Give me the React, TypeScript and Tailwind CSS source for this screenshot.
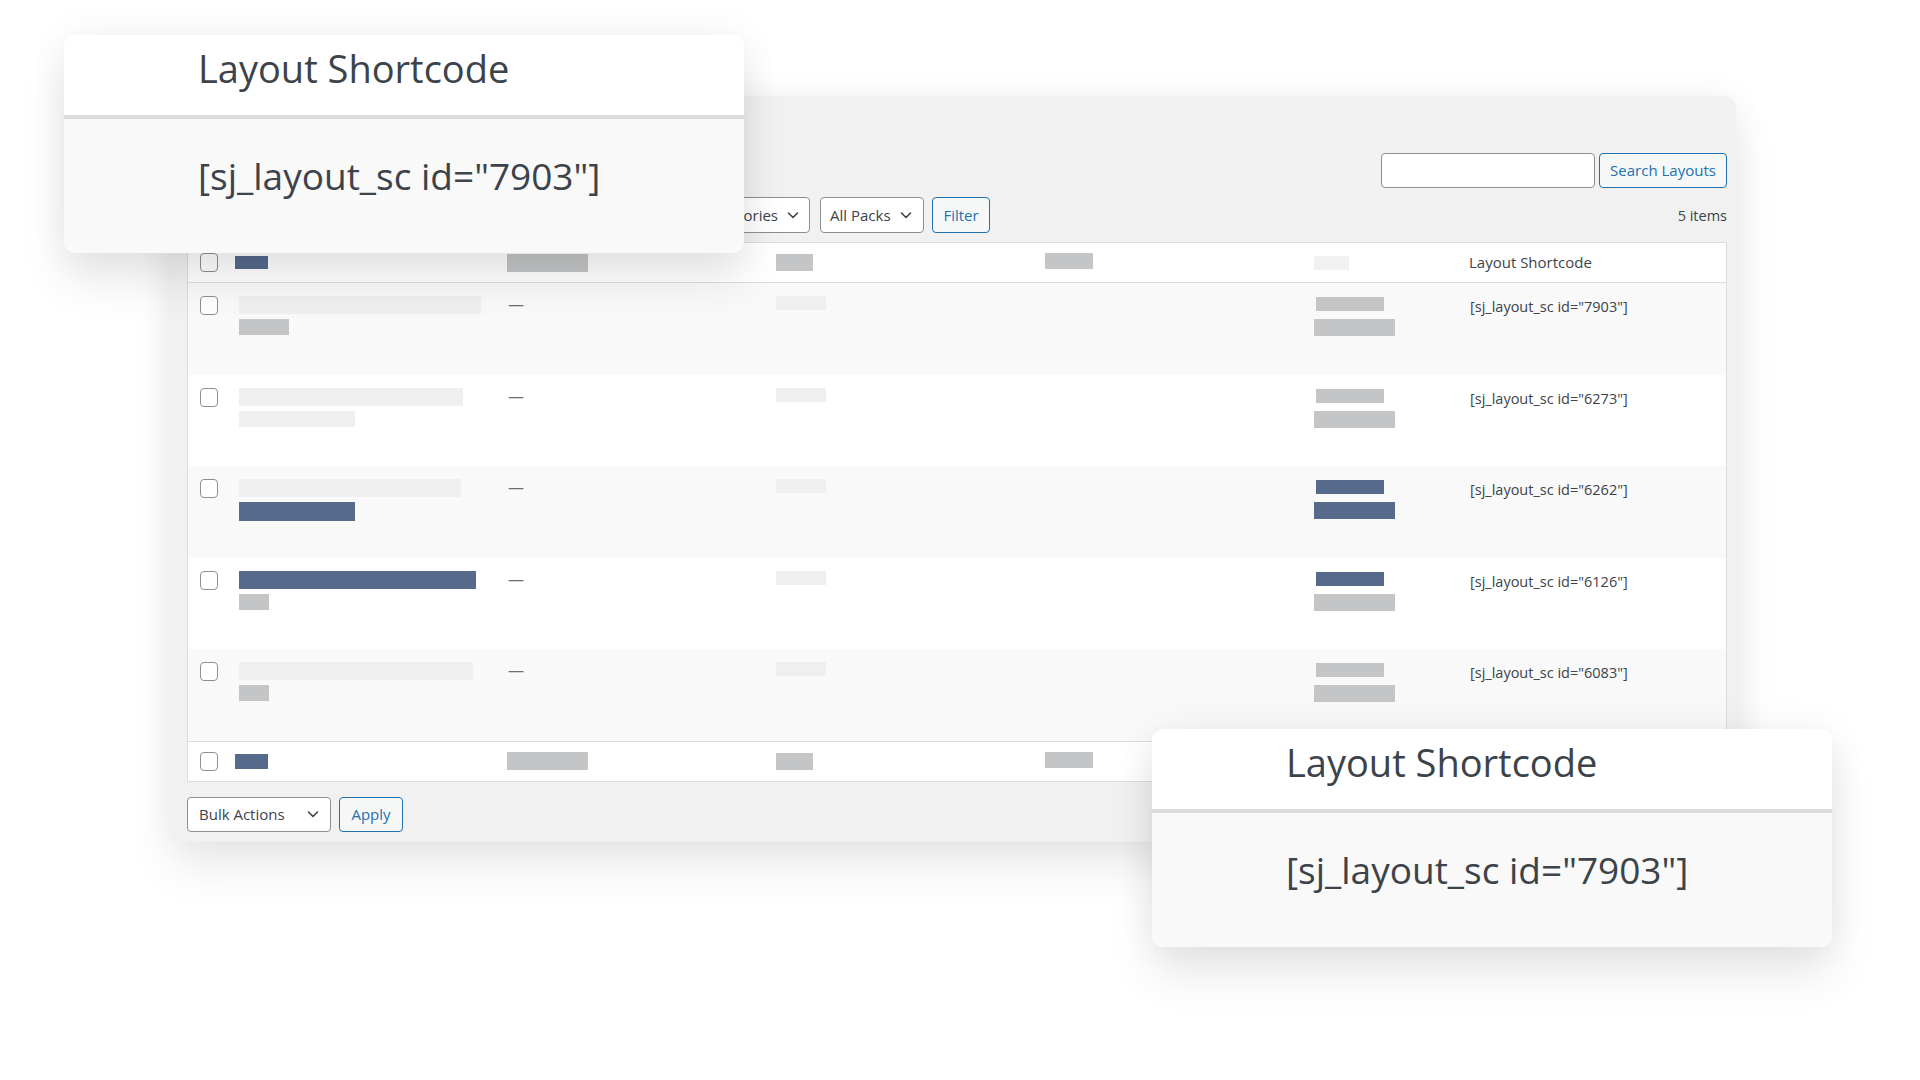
import { FC } from "react";

const font = { fontFamily: '"Open Sans", "Liberation Sans", sans-serif' };

type Bar = { w: number; tone: "light" | "gray" | "blue" };
type Row = { bar1: Bar; bar2: Bar; pack1: Bar; pack2: Bar; id: string };

const rows: Row[] = [
  { bar1: { w: 242, tone: "light" }, bar2: { w: 50, tone: "gray" }, pack1: { w: 68, tone: "gray" }, pack2: { w: 81, tone: "gray" }, id: "7903" },
  { bar1: { w: 224, tone: "light" }, bar2: { w: 116, tone: "light" }, pack1: { w: 68, tone: "gray" }, pack2: { w: 81, tone: "gray" }, id: "6273" },
  { bar1: { w: 222, tone: "light" }, bar2: { w: 116, tone: "blue" }, pack1: { w: 68, tone: "blue" }, pack2: { w: 81, tone: "blue" }, id: "6262" },
  { bar1: { w: 237, tone: "blue" }, bar2: { w: 30, tone: "gray" }, pack1: { w: 68, tone: "blue" }, pack2: { w: 81, tone: "gray" }, id: "6126" },
  { bar1: { w: 234, tone: "light" }, bar2: { w: 30, tone: "gray" }, pack1: { w: 68, tone: "gray" }, pack2: { w: 81, tone: "gray" }, id: "6083" },
];

const toneClass = (tone: Bar["tone"]) =>
  tone === "blue" ? "bg-[#566a8c]" : tone === "gray" ? "bg-[#c3c5c6]" : "bg-[#efefef]";

const Chevron: FC = () => (
  <svg width="14" height="14" viewBox="0 0 14 14" fill="none" className="shrink-0">
    <path d="M2.5 5l4.5 4.5L11.5 5" stroke="#3c434a" strokeWidth="1.6" strokeLinecap="round" strokeLinejoin="round" />
  </svg>
);

const Checkbox: FC = () => (
  <div className="w-[18px] h-[19px] rounded-[4px] border border-[#8c8f94] bg-white" />
);

const cols = "grid grid-cols-[39px_270px_269px_269px_269px_155px_267px]";

const ShortcodeCard: FC<{ pos: string }> = ({ pos }) => (
  <div
    className={`absolute ${pos} w-[680px] h-[218px] rounded-xl flex flex-col shadow-[0_28px_45px_rgba(0,0,0,0.09),0_0_38px_rgba(0,0,0,0.06)] text-[#3c434a]`}
    style={font}
  >
    <div className="h-[80px] bg-white rounded-t-xl pl-[134px] pt-[14px] text-[38px] leading-none">
      Layout Shortcode
    </div>
    <div className="h-[4px] bg-[#dcdcdc]" />
    <div className="flex-1 bg-[#f9f9f9] rounded-b-xl pl-[134px] pt-[38px] text-[37px] leading-none">
      [sj_layout_sc id="7903"]
    </div>
  </div>
);

const App: FC = () => {
  return (
    <div className="relative w-[1920px] h-[1080px] overflow-hidden bg-white text-[#3c434a]" style={font}>
      {/* list panel */}
      <div className="ml-[171px] mt-[96px] w-[1565px] h-[746px] rounded-xl bg-[#f1f1f1] pl-[16px] pr-[9px] pt-[57px] flex flex-col shadow-[0_26px_45px_rgba(0,0,0,0.08),0_0_34px_rgba(0,0,0,0.05)]">
        {/* search */}
        <div className="flex justify-end gap-[4px] h-[35px]">
          <div className="w-[214px] h-full rounded-[4px] border border-[#8c8f94] bg-white" />
          <div className="w-[128px] h-full rounded-[4px] border border-[#2271b1] bg-[#f6f7f7] flex items-center justify-center text-[15px] text-[#2271b1]">
            Search Layouts
          </div>
        </div>

        {/* filters */}
        <div className="mt-[9px] h-[36px] flex items-center pl-[485px]">
          <div className="w-[138px] h-full rounded-[4px] border border-[#8c8f94] bg-white flex items-center justify-end gap-[8px] pr-[9px] text-[15px]">
            All Categories
            <Chevron />
          </div>
          <div className="ml-[10px] w-[104px] h-full rounded-[4px] border border-[#8c8f94] bg-white flex items-center gap-[8px] pl-[9px] text-[15px]">
            All Packs
            <Chevron />
          </div>
          <div className="ml-[8px] w-[58px] h-full rounded-[4px] border border-[#2271b1] bg-[#f6f7f7] flex items-center justify-center text-[15px] text-[#2271b1]">
            Filter
          </div>
          <div className="ml-auto text-[14.5px] pt-[2px]">5 items</div>
        </div>

        {/* table */}
        <div className="mt-[9px] border border-[#dcdcde] flex flex-col">
          <div className={`${cols} h-[40px] bg-white border-b border-[#dcdcde] items-center`}>
            <div className="pl-[12px]"><Checkbox /></div>
            <div className="pl-[8px]"><div className="w-[33px] h-[13px] bg-[#566a8c]" /></div>
            <div className="pl-[10px]"><div className="w-[81px] h-[18px] bg-[#c3c5c6]" /></div>
            <div className="pl-[10px]"><div className="w-[37px] h-[17px] bg-[#c3c5c6]" /></div>
            <div className="pl-[10px]"><div className="w-[48px] h-[16px] bg-[#c3c5c6] -mt-[3px]" /></div>
            <div className="pl-[10px]"><div className="w-[35px] h-[14px] bg-[#f1f1f1]" /></div>
            <div className="pl-[10px] text-[15px]">Layout Shortcode</div>
          </div>

          {rows.map((r, i) => (
            <div key={r.id} className={`${cols} h-[91.6px] ${i % 2 === 0 ? "bg-[#f9f9f9]" : "bg-white"}`}>
              <div className="pl-[12px] pt-[13px]"><Checkbox /></div>
              <div className="pl-[12px] pt-[13px] flex flex-col gap-[5px]">
                <div className={`h-[18px] ${toneClass(r.bar1.tone)}`} style={{ width: r.bar1.w }} />
                <div className={`${r.bar2.tone === "blue" ? "h-[19px]" : "h-[16px]"} ${toneClass(r.bar2.tone)}`} style={{ width: r.bar2.w }} />
              </div>
              <div className="pl-[11px] pt-[13px] text-[16px] text-[#6b6f74] leading-none">—</div>
              <div className="pl-[10px] pt-[13px]"><div className="w-[50px] h-[14px] bg-[#efefef]" /></div>
              <div />
              <div className="pt-[14px] flex flex-col gap-[8px]">
                <div className={`ml-[12px] h-[14px] ${toneClass(r.pack1.tone)}`} style={{ width: r.pack1.w }} />
                <div className={`ml-[10px] h-[17px] ${toneClass(r.pack2.tone)}`} style={{ width: r.pack2.w }} />
              </div>
              <div className="pl-[11px] pt-[17px] text-[14.5px] leading-none">[sj_layout_sc id="{r.id}"]</div>
            </div>
          ))}

          <div className={`${cols} h-[40px] bg-white border-t border-[#dcdcde] items-center`}>
            <div className="pl-[12px]"><Checkbox /></div>
            <div className="pl-[8px]"><div className="w-[33px] h-[15px] bg-[#566a8c]" /></div>
            <div className="pl-[10px]"><div className="w-[81px] h-[18px] bg-[#c3c5c6]" /></div>
            <div className="pl-[10px]"><div className="w-[37px] h-[17px] bg-[#c3c5c6]" /></div>
            <div className="pl-[10px]"><div className="w-[48px] h-[16px] bg-[#c3c5c6] -mt-[3px]" /></div>
            <div />
            <div />
          </div>
        </div>

        {/* bulk actions */}
        <div className="mt-[15px] h-[35px] flex gap-[8px]">
          <div className="w-[144px] h-full rounded-[4px] border border-[#8c8f94] bg-white flex items-center justify-between pl-[11px] pr-[10px] text-[15px]">
            Bulk Actions
            <Chevron />
          </div>
          <div className="w-[64px] h-full rounded-[4px] border border-[#2271b1] bg-[#f6f7f7] flex items-center justify-center text-[15px] text-[#2271b1]">
            Apply
          </div>
        </div>
      </div>

      <ShortcodeCard pos="left-[64px] top-[35px]" />
      <ShortcodeCard pos="left-[1152px] top-[729px]" />
    </div>
  );
};

export default App;
